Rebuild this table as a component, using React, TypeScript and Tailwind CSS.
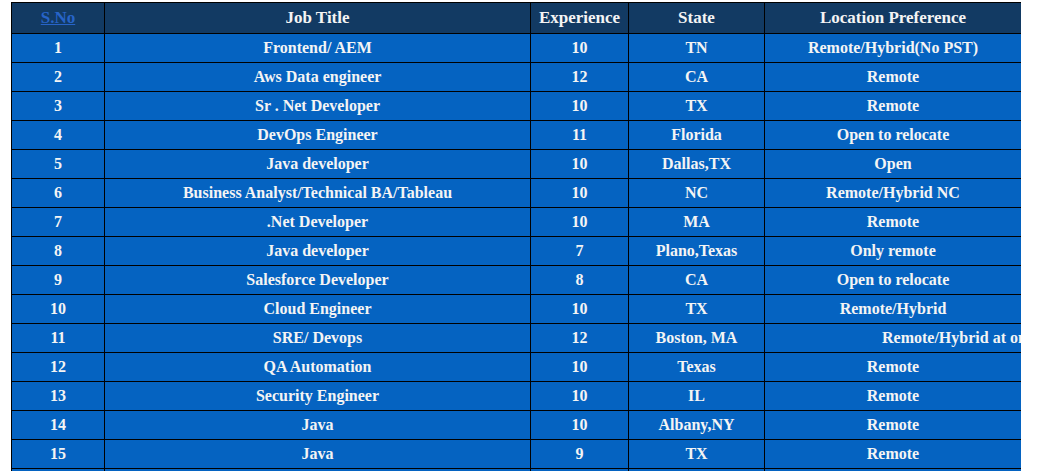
import React from "react";

const rows: [string, string, string, string, string][] = [
  ["1", "Frontend/ AEM", "10", "TN", "Remote/Hybrid(No PST)"],
  ["2", "Aws Data engineer", "12", "CA", "Remote"],
  ["3", "Sr . Net Developer", "10", "TX", "Remote"],
  ["4", "DevOps Engineer", "11", "Florida", "Open to relocate"],
  ["5", "Java developer", "10", "Dallas,TX", "Open"],
  ["6", "Business Analyst/Technical BA/Tableau", "10", "NC", "Remote/Hybrid NC"],
  ["7", ".Net Developer", "10", "MA", "Remote"],
  ["8", "Java developer", "7", "Plano,Texas", "Only remote"],
  ["9", "Salesforce Developer", "8", "CA", "Open to relocate"],
  ["10", "Cloud Engineer", "10", "TX", "Remote/Hybrid"],
  ["11", "SRE/ Devops", "12", "Boston, MA", "__OVERFLOW__"],
  ["12", "QA Automation", "10", "Texas", "Remote"],
  ["13", "Security Engineer", "10", "IL", "Remote"],
  ["14", "Java", "10", "Albany,NY", "Remote"],
  ["15", "Java", "9", "TX", "Remote"],
  ["", "", "", "", ""],
];

const font = { fontFamily: '"Liberation Serif", "Times New Roman", serif' };

export default function App() {
  return (
    <div className="w-[1054px] min-h-[471px] bg-white">
      <div className="w-[1021px] overflow-hidden pl-[11px] pt-[2px]">
        <table
          className="table-fixed border-collapse w-[1010px] font-bold text-[#f4f4f4]"
          style={font}
        >
          <colgroup>
            <col className="w-[93px]" />
            <col className="w-[426px]" />
            <col className="w-[98px]" />
            <col className="w-[136px]" />
            <col className="w-[257px]" />
          </colgroup>
          <thead>
            <tr className="h-[31px] bg-[#123a63] text-[17px]">
              <th className="border border-black p-0 text-center font-bold">
                <a className="text-[#2764c8] underline" href="#">
                  S.No
                </a>
              </th>
              <th className="border border-black p-0 text-center font-bold">Job Title</th>
              <th className="border border-black p-0 text-center font-bold">Experience</th>
              <th className="border border-black p-0 text-center font-bold">State</th>
              <th className="border border-black p-0 text-center font-bold">Location Preference</th>
            </tr>
          </thead>
          <tbody className="text-[16px]">
            {rows.map((r, i) => (
              <tr key={i} className="h-[29px] bg-[#0563c1]">
                <td className="border border-black p-0 text-center">{r[0]}</td>
                <td className="border border-black p-0 text-center">{r[1]}</td>
                <td className="border border-black p-0 text-center">{r[2]}</td>
                <td className="border border-black p-0 text-center">{r[3]}</td>
                {r[4] === "__OVERFLOW__" ? (
                  <td className="relative border border-black p-0 text-left">
                    <div className="absolute left-[117px] top-0 bottom-0 w-[400px] bg-[#0563c1] whitespace-nowrap flex items-center">
                      <span>Remote/Hybrid at onsite</span>
                    </div>
                    <span className="invisible">x</span>
                  </td>
                ) : (
                  <td className="border border-black p-0 text-center">{r[4]}</td>
                )}
              </tr>
            ))}
          </tbody>
        </table>
      </div>
    </div>
  );
}
